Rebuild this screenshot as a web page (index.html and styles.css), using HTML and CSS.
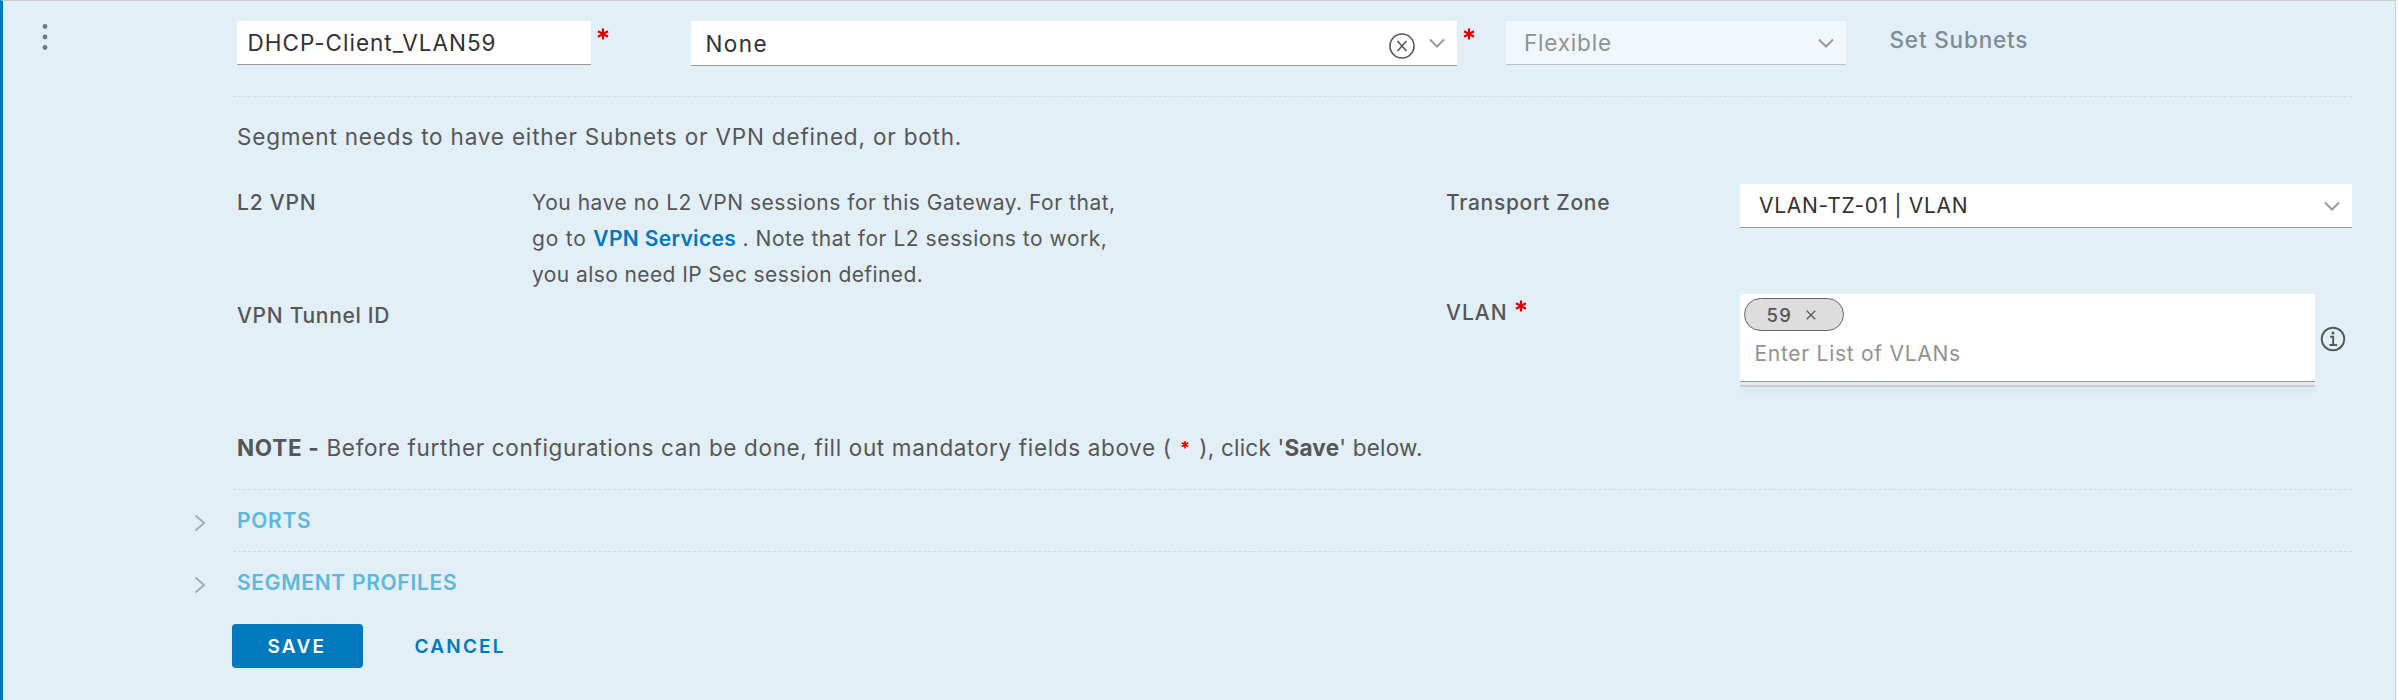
FILE: index.html
```html
<!DOCTYPE html>
<html lang="en">
<head>
<meta charset="utf-8">
<title>Segment</title>
<link rel="stylesheet" href="styles.css">
</head>
<body>
<main class="panel">
  <section class="row head">
    <svg class="menu" viewBox="0 0 8 28" width="8" height="28"><circle cx="4" cy="3.5" r="2.4"/><circle cx="4" cy="14" r="2.4"/><circle cx="4" cy="24.5" r="2.4"/></svg>
    <div class="head-fields">
      <div class="field name"><span class="t-name">DHCP-Client_VLAN59</span></div>
      <svg class="star s1" viewBox="0 0 12 12" width="12" height="12"><path d="M6 .4v11.2M1 3.2l10 5.6M11 3.2L1 8.8"/></svg>
      <div class="field gateway"><span class="t-none">None</span>
        <svg class="clear" viewBox="0 0 26 26" width="26" height="26"><circle cx="13" cy="13" r="12"/><path d="M8.5 8l9 10M17.5 8l-9 10"/></svg>
        <svg class="chev" viewBox="0 0 16 10" width="16" height="10"><path d="M1 1.5l7 7 7-7"/></svg>
      </div>
      <svg class="star s2" viewBox="0 0 12 12" width="12" height="12"><path d="M6 .4v11.2M1 3.2l10 5.6M11 3.2L1 8.8"/></svg>
      <div class="field flexible"><span class="t-flex">Flexible</span>
        <svg class="chev" viewBox="0 0 16 10" width="16" height="10"><path d="M1 1.5l7 7 7-7"/></svg>
      </div>
      <span class="subnets">Set Subnets</span>
    </div>
  </section>
  <section class="details">
    <p class="hint">Segment needs to have either Subnets or VPN defined, or both.</p>
    <div class="form">
      <span class="label t-l2">L2 VPN</span>
      <p class="info">You have no L2 VPN sessions for this Gateway. For that,<br><span class="t-go">go to </span><a class="link">VPN Services</a> . Note that for L2 sessions to work,<br><span class="t-need">you also need IP Sec session defined.</span></p>
      <span class="label">Transport Zone</span>
      <div class="field zone"><span>VLAN-TZ-01 | VLAN</span>
        <svg class="chev" viewBox="0 0 16 10" width="16" height="10"><path d="M1 1.5l7 7 7-7"/></svg>
      </div>
      <span class="label tunnel">VPN Tunnel ID</span>
      <span></span>
      <span class="label vlan"><span class="t-vlan">VLAN</span><svg class="star s3" viewBox="0 0 12 12" width="12" height="12"><path d="M6 .4v11.2M1 3.2l10 5.6M11 3.2L1 8.8"/></svg></span>
      <div class="vlan-cell">
        <div class="tags">
          <div class="tags-box">
            <span class="chip"><span>59</span><svg viewBox="0 0 10 10" width="10" height="10"><path d="M.7.7l8.6 8.6M9.3.7L.7 9.3"/></svg></span>
            <span class="placeholder">Enter List of VLANs</span>
          </div>
          <div class="underline"></div>
        </div>
        <svg class="about" viewBox="0 0 26 26" width="26" height="26"><circle cx="13" cy="13" r="11.3"/><path d="M10.2 10.8h3v8M9.5 19h7.5"/><circle class="dot" cx="13" cy="7" r="1.5"/></svg>
      </div>
    </div>
    <p class="note"><b class="t-lead">NOTE -</b> Before further configurations can be done, fill out mandatory fields above ( <span class="red">*</span> <span class="t-tail">), click '<b>Save</b>' below.</span></p>
  </section>
  <section class="row accordion">
    <svg class="caret" viewBox="0 0 12 18" width="12" height="18"><path d="M1.5 1.5L10 9l-8.5 7.5"/></svg>
    <h2>PORTS</h2>
  </section>
  <section class="row accordion">
    <svg class="caret" viewBox="0 0 12 18" width="12" height="18"><path d="M1.5 1.5L10 9l-8.5 7.5"/></svg>
    <h2>SEGMENT PROFILES</h2>
  </section>
  <footer class="actions">
    <button class="save">SAVE</button>
    <button class="cancel">CANCEL</button>
  </footer>
</main>
</body>
</html>
```
FILE: styles.css
```css
* { box-sizing: border-box; }
body { margin: 0; background: #fafafa; font-family: Inter, "Liberation Sans", sans-serif; font-size: 22.5px; color: #565656; }
p, h2 { margin: 0; }
svg { display: block; flex: none; fill: none; }
.panel { width: 2396px; height: 700px; background: #e2eff7; border: solid #ccc; border-width: 1px 1px 0 0; border-left: 3px solid #0079be; }
.row { display: grid; grid-template-columns: 230px 2119px; }
.head { height: 95px; }
.menu { margin: 21.5px 0 0 37.5px; fill: #6c7980; }
.head-fields { display: flex; align-items: flex-start; padding: 20px 0 0 4px; }
.field { display: flex; align-items: center; height: 44px; background: #fff; border-bottom: 1px solid #999; color: #313131; }
.name { width: 354px; padding-left: 10.5px; }
.t-name { letter-spacing: 1px; }
.t-none { letter-spacing: 1.4px; }
.t-flex { letter-spacing: .8px; }
.star { stroke: #e00000; stroke-width: 2.2; }
.s1 { margin: 7px 82px 0 6px; }
.gateway { width: 766px; height: 45px; padding: 0 12px 0 14.5px; }
.clear { margin: 5px 14px 0 auto; stroke: #565656; stroke-width: 1.6; }
.chev { stroke: #999; stroke-width: 2; }
.s2 { margin: 7px 31px 0 6px; }
.flexible { width: 340px; padding: 0 12px 0 18px; background: #f1f7fb; border-color: #bbc1c5; color: #8e9395; }
.flexible .chev, .zone .chev { margin-left: auto; }
.subnets { margin-left: 43.5px; line-height: 37px; font-weight: 500; color: #7d8c95; letter-spacing: .82px; }
.details { margin-left: 230px; width: 2119px; height: 393px; border-top: 1px dashed #dcdcdc; padding-left: 4px; }
.hint { padding-top: 26px; line-height: 28px; letter-spacing: .82px; }
.form { display: grid; grid-template-columns: 295px 914px 294px 612px; row-gap: 2px; margin-top: 33px; font-size: 21px; line-height: 36px; }
.label { font-weight: 500; padding-top: 1px; letter-spacing: .7px; }
.t-l2 { letter-spacing: .8px; }
.info { height: 108px; padding-top: 1px; letter-spacing: .52px; }
.t-go { letter-spacing: .8px; }
.link { color: #0079be; font-weight: 600; letter-spacing: .33px; }
.t-need { letter-spacing: .41px; }
.zone { padding: 0 12px 0 19px; letter-spacing: .68px; }
.tunnel { margin-top: 3px; }
.vlan { display: flex; }
.t-vlan { letter-spacing: 1px; }
.s3 { margin: 5px 0 0 7px; }
.vlan-cell { display: flex; }
.tags { width: 575px; }
.tags-box { height: 88px; background: #fff; border-bottom: 1px solid #999; padding: 4px; }
.chip { display: flex; align-items: center; width: 100px; height: 33px; padding-left: 21.5px; border: 1px solid #666; border-radius: 17px; background: #ddd; font-size: 18.5px; font-weight: 500; line-height: 28px; letter-spacing: 1.2px; }
.chip svg { margin-left: 14px; stroke: #565656; stroke-width: 1.3; }
.placeholder { display: block; padding: 5px 0 0 10.5px; color: #919191; letter-spacing: .72px; }
.underline { height: 2px; margin-top: 3px; background: #ccc; box-shadow: 0 3px 8px rgba(0, 0, 0, .12); }
.about { margin: 32px 0 0 5px; stroke: #565656; stroke-width: 1.9; }
.dot { fill: #565656; stroke: none; }
.note { margin-top: 47px; line-height: 28px; letter-spacing: .65px; }
.note b { font-weight: 700; }
.note .t-lead { letter-spacing: .7px; }
.t-tail { letter-spacing: .22px; }
.red { margin: 0 1.5px; font-size: 18px; line-height: 0; vertical-align: 2px; color: #e00000; font-weight: 700; }
.accordion { height: 62px; align-items: center; }
.accordion h2 { height: 62px; padding-left: 4px; line-height: 61px; font-size: 21px; font-weight: 600; color: #5eb7dc; border-top: 1px dashed #d3dade; letter-spacing: .7px; }
.caret { margin: 5px 0 0 191px; stroke: #a4adb2; stroke-width: 2; }
.actions { display: flex; padding: 11px 0 0 229px; }
.actions button { height: 44px; border: 0; border-radius: 4px; padding: 0 0 0 35.5px; font: 600 19px Inter, sans-serif; letter-spacing: 2.2px; text-align: left; }
.save { width: 131px; background: #0079be; color: #fff; }
.actions .cancel { margin-left: 16px; width: 170px; background: none; color: #0079be; }
```
